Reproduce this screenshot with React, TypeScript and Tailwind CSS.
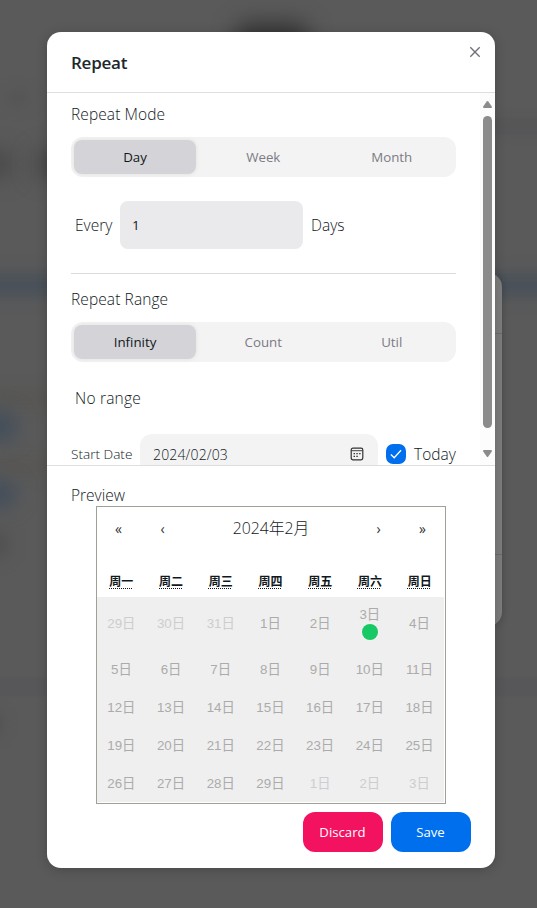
import type { ReactNode } from "react";

const weekdays = ["周一", "周二", "周三", "周四", "周五", "周六", "周日"];

type Day = { n: number; outside?: boolean; marked?: boolean };

const days: Day[] = [
  ...[29, 30, 31].map((n) => ({ n, outside: true })),
  ...Array.from({ length: 29 }, (_, i) => ({ n: i + 1, marked: i === 2 })),
  ...[1, 2, 3].map((n) => ({ n, outside: true })),
];

const weeks = [0, 1, 2, 3, 4].map((w) => days.slice(w * 7, w * 7 + 7));

function Tabs({ items }: { items: string[] }) {
  return (
    <div className="flex h-10 items-center rounded-xl bg-[#f3f3f4] p-[3px]">
      {items.map((item, i) => (
        <button
          key={item}
          className={
            i === 0
              ? "h-[34px] w-[122px] rounded-lg bg-[#d4d4d8] pt-[2px] text-[13.3px] text-[#11181c] shadow-[0_0_5px_rgba(0,0,0,0.08)]"
              : "h-[34px] flex-1 pt-[2px] pl-[6px] text-[13.3px] text-[#7b7b83]"
          }
        >
          {item}
        </button>
      ))}
    </div>
  );
}

function NavButton({ children }: { children: ReactNode }) {
  return (
    <button className="w-11 pr-px pb-[2px] text-center font-['Open_Sans',sans-serif] text-[14px] text-[#2b3135]">
      {children}
    </button>
  );
}

function Backdrop() {
  return (
    <div className="absolute inset-0 overflow-hidden bg-[#5a5a5a]">
      <div className="absolute top-[22px] left-[234px] h-[32px] w-[76px] rounded-full bg-[#353535] blur-[11px]" />
      <div className="absolute top-[90px] left-[8px] h-4 w-5 rounded-full bg-[#545454] blur-[7px]" />
      <div className="absolute top-[152px] -left-[14px] h-6 w-[24px] bg-[#444444] blur-[11px]" />
      <div className="absolute top-[152px] left-[36px] h-6 w-[40px] bg-[#444444] blur-[11px]" />
      <div className="absolute top-[116px] left-[480px] h-5 w-20 bg-[#565658] blur-[4px]" />
      <div className="absolute top-[274px] -left-5 h-[22px] w-[580px] bg-[#485059] blur-[8px]" />
      <div className="absolute top-[392px] -left-2 h-3 w-16 bg-[#575551] blur-[8px]" />
      <div className="absolute top-[460px] -left-2 h-3 w-16 bg-[#575551] blur-[8px]" />
      <div className="absolute top-[412px] -left-[20px] h-7 w-9 rounded-full bg-[#3f4c5b] blur-[10px]" />
      <div className="absolute top-[482px] -left-[20px] h-6 w-9 rounded-full bg-[#3f4c5b] blur-[10px]" />
      <div className="absolute top-[530px] -left-[16px] h-7 w-6 rounded-full bg-[#4f4f4f] blur-[8px]" />
      <div className="absolute top-[678px] -left-5 h-[18px] w-[580px] bg-[#575759] blur-[1px]" />
      <div className="absolute top-[712px] -left-[18px] h-6 w-5 rounded-full bg-[#505050] blur-[7px]" />
      <div className="absolute top-[273px] left-[400px] h-[353px] w-[102px] rounded-[14px] bg-[#7d7d7d] shadow-[0_0_8px_rgba(0,0,0,0.2)]">
        <div className="mt-[60px] h-[222px] border-y border-[#6b6b6b]" />
      </div>
    </div>
  );
}

export default function App() {
  return (
    <div className="relative h-[908px] w-[537px] overflow-hidden font-['Open_Sans','Noto_Sans_CJK_SC',sans-serif] text-[#11181c]">
      <Backdrop />
      <div className="relative mx-auto mt-8 ml-[47px] flex h-[836px] w-[448px] flex-col overflow-hidden rounded-[14px] bg-white shadow-[0_2px_12px_rgba(0,0,0,0.2)]">
        <header className="flex h-[61px] shrink-0 justify-between border-b border-[#dedede] pl-6">
          <h2 className="pt-[17px] text-[17px] leading-7 font-semibold tracking-[-0.25px] text-[#20272b]">Repeat</h2>
          <button className="mt-[13px] mr-[13px] h-[14px] w-[14px] text-[#71717a]">
            <svg viewBox="0 0 14 14" fill="none" stroke="currentColor" strokeWidth="1.4">
              <path d="M2.3 2.3 11.7 11.7M11.7 2.3 2.3 11.7" />
            </svg>
          </button>
        </header>

        <div className="flex h-[372px] shrink-0 overflow-hidden">
          <main className="w-[433px] pr-6 pl-6 font-light">
            <p className="pt-[9px] text-[15.5px] leading-6 tracking-[0.1px]">Repeat Mode</p>
            <div className="mt-[11px] font-normal">
              <Tabs items={["Day", "Week", "Month"]} />
            </div>
            <div className="mt-6 flex h-12 items-center gap-2 pl-1 text-[15.5px]">
              <span className="w-[37px] pt-[2px] whitespace-nowrap">Every</span>
              <div className="flex h-12 w-[183px] items-center rounded-lg bg-[#eaeaec] pl-3 text-[13.5px] font-normal">1</div>
              <span className="pt-[2px]">Days</span>
            </div>
            <div className="mt-6 border-t border-[#dcdcde]" />
            <p className="mt-[13px] text-[15.5px] leading-6 tracking-[0.1px]">Repeat Range</p>
            <div className="mt-[11px] font-normal">
              <Tabs items={["Infinity", "Count", "Util"]} />
            </div>
            <p className="mt-6 pl-1 text-[15.5px] leading-6 tracking-[0.2px]">No range</p>
            <div className="mt-6 flex h-10 items-center gap-2">
              <span className="w-[61px] text-[13.6px] whitespace-nowrap">Start Date</span>
              <div className="flex h-10 w-[238px] items-center justify-between rounded-xl bg-[#f3f3f4] pr-[14px] pl-[13px] text-[14px]">
                <span className="tracking-[0.15px]">2024/02/03</span>
                <svg className="h-[14px] w-[14px]" viewBox="0 0 14 14">
                  <rect x="1.2" y="1.2" width="11.6" height="11.6" rx="1.7" fill="none" stroke="#333" strokeWidth="1.2" />
                  <path d="M1 3.7h12" stroke="#444" strokeWidth="1" />
                  <path d="M6.4 6h1.3v1.3H6.4zM9.2 6h1.3v1.3H9.2zM3.6 6h1.3v1.3H3.6zM3.6 8.8h1.3v1.3H3.6zM6.4 8.8h1.3v1.3H6.4z" fill="#222" />
                </svg>
              </div>
              <span className="flex h-5 w-5 items-center justify-center rounded-[7px] bg-[#006fee]">
                <svg className="h-3 w-3" viewBox="0 0 12 12" fill="none" stroke="white" strokeWidth="1.3">
                  <path d="M.9 6.5 4.2 9.8 11 2.2" />
                </svg>
              </span>
              <span className="pt-[2px] text-[15.5px]">Today</span>
            </div>
          </main>
          <div className="flex w-[15px] flex-col items-center bg-[#fcfcfc]">
            <svg className="mt-2 h-[7px] w-[9px]" viewBox="0 0 9 7" fill="#8b8b8b">
              <path d="M3.7.6Q4.5-.4 5.3.6L8.8 5.5Q9.3 7 8 7H1Q-.3 7 .2 5.5Z" />
            </svg>
            <div className="mt-2 h-[312px] w-[9px] rounded-full bg-[#8b8b8b]" />
            <svg className="mt-[22px] h-[7px] w-[9px]" viewBox="0 0 9 7" fill="#8b8b8b">
              <path d="M3.7 6.4Q4.5 7.4 5.3 6.4L8.8 1.5Q9.3 0 8 0H1Q-.3 0 .2 1.5Z" />
            </svg>
          </div>
        </div>

        <footer className="flex flex-1 flex-col border-t border-[#dedede] px-6">
          <p className="mt-[17px] h-[23px] text-[15.5px] leading-6 font-light">Preview</p>
          <div className="ml-[25px] h-[298px] w-[350px] border border-[#a0a096] bg-white">
            <div className="mb-4 flex h-11 items-center">
              <NavButton>«</NavButton>
              <NavButton>‹</NavButton>
              <span className="flex-1 text-center text-[15.8px] font-light">2024年2月</span>
              <NavButton>›</NavButton>
              <NavButton>»</NavButton>
            </div>
            <div className="grid h-[30px] w-[348px] grid-cols-7 items-center text-center text-[12px] leading-[18px] font-bold">
              {weekdays.map((d) => (
                <span key={d} className="pr-px">
                  <abbr className="underline decoration-dotted decoration-1 underline-offset-2">{d}</abbr>
                </span>
              ))}
            </div>
            <div className="w-[347px] bg-[#efefef] font-['Liberation_Sans','Noto_Sans_CJK_SC',sans-serif] text-[13.33px] leading-4">
              {weeks.map((week, w) => (
                <div key={w} className={w === 0 ? "flex h-[53px] items-center" : "flex h-[38px] items-center pt-[2px]"}>
                  {week.map((d, i) => (
                    <div
                      key={i}
                      className={
                        d.outside
                          ? "flex w-[49.7px] shrink-0 flex-col items-center text-[#cdcdcd]"
                          : "flex w-[49.7px] shrink-0 flex-col items-center text-[#ababab]"
                      }
                    >
                      <span className="pr-px">{d.n}日</span>
                      {d.marked && <i className="mt-px h-4 w-4 rounded-full bg-[#17c964]" />}
                    </div>
                  ))}
                </div>
              ))}
            </div>
          </div>
          <div className="mt-2 flex justify-end gap-2 text-[13.2px] text-white">
            <button className="h-10 w-20 rounded-xl bg-[#f31260] pt-[2px] pr-px">Discard</button>
            <button className="h-10 w-20 rounded-xl bg-[#006fee] pt-[2px] pr-px">Save</button>
          </div>
        </footer>
      </div>
    </div>
  );
}
